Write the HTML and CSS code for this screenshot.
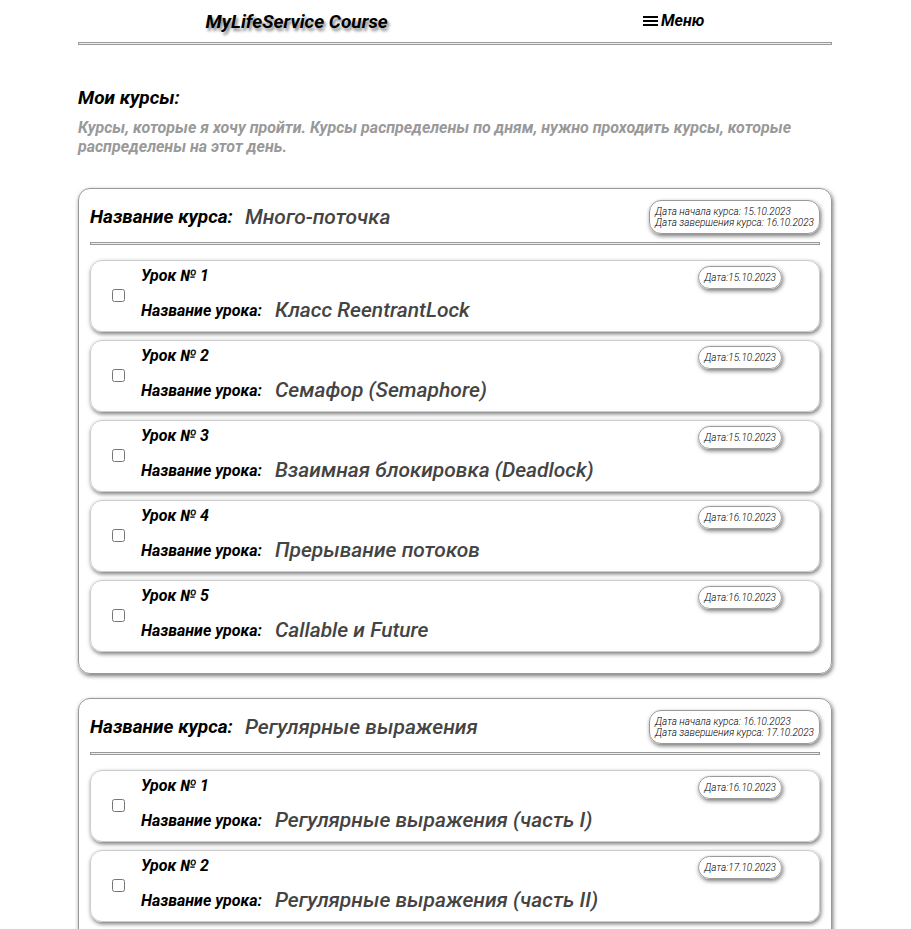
FILE: index.html
```html
<!DOCTYPE html>
<html lang="ru">
<head>
<meta charset="utf-8">
<title>MyLifeService Course</title>
<link rel="stylesheet" href="styles.css">
</head>
<body>
<div class="page">
  <header class="header">
    <a class="logo" href="#">MyLifeService Course</a>
    <button class="menu" type="button">
      <svg class="menu-icon" width="15" height="10" viewBox="0 0 15 10" aria-hidden="true"><path d="M0 0h15v2H0zM0 4h15v2H0zM0 8h15v2H0z"/></svg>
      Меню
    </button>
  </header>
  <hr class="rule">
  <main>
    <h1 class="title">Мои курсы:</h1>
    <p class="intro">Курсы, которые я хочу пройти. Курсы распределены по дням, нужно проходить курсы, которые распределены на этот день.</p>

    <section class="course">
      <div class="course-head">
        <h2 class="course-title"><span class="course-label">Название курса:</span><span class="name">Много-поточка</span></h2>
        <div class="badge">Дата начала курса: 15.10.2023<br>Дата завершения курса: 16.10.2023</div>
      </div>
      <hr class="rule">
      <div class="lessons">
        <article class="lesson">
          <input class="check" type="checkbox" id="a1">
          <label class="lesson-text" for="a1"><span class="number">Урок № 1</span><span class="lesson-title"><span class="lesson-label">Название урока:</span><span class="name">Класс ReentrantLock</span></span></label>
          <div class="badge">Дата:15.10.2023</div>
        </article>
        <article class="lesson">
          <input class="check" type="checkbox" id="a2">
          <label class="lesson-text" for="a2"><span class="number">Урок № 2</span><span class="lesson-title"><span class="lesson-label">Название урока:</span><span class="name">Семафор (Semaphore)</span></span></label>
          <div class="badge">Дата:15.10.2023</div>
        </article>
        <article class="lesson">
          <input class="check" type="checkbox" id="a3">
          <label class="lesson-text" for="a3"><span class="number">Урок № 3</span><span class="lesson-title"><span class="lesson-label">Название урока:</span><span class="name">Взаимная блокировка (Deadlock)</span></span></label>
          <div class="badge">Дата:15.10.2023</div>
        </article>
        <article class="lesson">
          <input class="check" type="checkbox" id="a4">
          <label class="lesson-text" for="a4"><span class="number">Урок № 4</span><span class="lesson-title"><span class="lesson-label">Название урока:</span><span class="name">Прерывание потоков</span></span></label>
          <div class="badge">Дата:16.10.2023</div>
        </article>
        <article class="lesson">
          <input class="check" type="checkbox" id="a5">
          <label class="lesson-text" for="a5"><span class="number">Урок № 5</span><span class="lesson-title"><span class="lesson-label">Название урока:</span><span class="name">Callable и Future</span></span></label>
          <div class="badge">Дата:16.10.2023</div>
        </article>
      </div>
    </section>

    <section class="course">
      <div class="course-head">
        <h2 class="course-title"><span class="course-label">Название курса:</span><span class="name">Регулярные выражения</span></h2>
        <div class="badge">Дата начала курса: 16.10.2023<br>Дата завершения курса: 17.10.2023</div>
      </div>
      <hr class="rule">
      <div class="lessons">
        <article class="lesson">
          <input class="check" type="checkbox" id="b1">
          <label class="lesson-text" for="b1"><span class="number">Урок № 1</span><span class="lesson-title"><span class="lesson-label">Название урока:</span><span class="name">Регулярные выражения (часть I)</span></span></label>
          <div class="badge">Дата:16.10.2023</div>
        </article>
        <article class="lesson">
          <input class="check" type="checkbox" id="b2">
          <label class="lesson-text" for="b2"><span class="number">Урок № 2</span><span class="lesson-title"><span class="lesson-label">Название урока:</span><span class="name">Регулярные выражения (часть II)</span></span></label>
          <div class="badge">Дата:17.10.2023</div>
        </article>
      </div>
    </section>
  </main>
</div>
</body>
</html>
```
FILE: styles.css
```css
* {
  box-sizing: border-box;
}

html {
  scrollbar-width: none;
}

body {
  margin: 0;
  background: #fff;
  color: #000;
  font-family: Roboto, sans-serif;
  font-size: 16px;
  font-style: italic;
}

.page {
  padding: 0 79px 0 78px;
}

.header {
  display: flex;
  justify-content: space-around;
  align-items: center;
  height: 42px;
}

.logo {
  padding-top: 2px;
  color: inherit;
  font-size: 19px;
  font-weight: 700;
  line-height: 22px;
  text-decoration: none;
  text-shadow: 2px 3px 3px #888;
}

.menu {
  display: flex;
  align-items: center;
  gap: 3px;
  padding: 0 0 2px;
  border: 0;
  background: none;
  color: inherit;
  font: inherit;
  font-weight: 700;
}

.menu-icon {
  margin-top: 2px;
}

.rule {
  height: 3px;
  margin: 0;
  border: 1px solid #999;
  background: #eee;
}

.title {
  margin: 42px 0 0;
  font-size: 19px;
  font-weight: 700;
  line-height: 22px;
}

.intro {
  margin: 9px 0 32px;
  color: #999;
  font-weight: 700;
  line-height: 19px;
}

.course {
  margin-bottom: 24px;
  padding: 11px 11px 21px;
  border: 1px solid #999;
  border-radius: 12px;
  box-shadow: 1px 2px 4px #777;
}

.course-head {
  display: flex;
  justify-content: space-between;
  align-items: flex-start;
  height: 42px;
}

.course-title {
  display: flex;
  align-items: center;
  gap: 12px;
  margin: 0;
  font-weight: 400;
  line-height: 34px;
}

.course-label {
  font-size: 19px;
  font-weight: 700;
}

.name {
  color: #444;
  font-size: 21px;
  font-weight: 500;
}

.badge {
  padding: 5px;
  border: 1px solid #999;
  border-radius: 12px;
  box-shadow: 1px 2px 4px #777;
  font-size: 10px;
  font-weight: 300;
  line-height: 11px;
}

.lessons {
  display: grid;
  gap: 8px;
  margin-top: 15px;
}

.lesson {
  display: flex;
  align-items: flex-start;
  padding: 5px 37px 9px 21px;
  border: 1px solid #ccc;
  border-radius: 12px;
  box-shadow: 1px 2px 4px #777;
}

.check {
  align-self: center;
  width: 13px;
  height: 13px;
  margin: 3px 16px 0 0;
}

.lesson-text {
  display: flex;
  flex: 1;
  flex-direction: column;
  gap: 13px;
}

.number,
.lesson-label {
  font-weight: 700;
  line-height: 19px;
}

.lesson-title {
  display: flex;
  align-items: center;
  gap: 13px;
}

.lesson-title .name {
  line-height: 24px;
}
```
